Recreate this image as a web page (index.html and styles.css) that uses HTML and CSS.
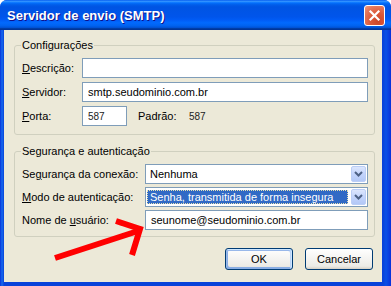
FILE: index.html
```html
<!DOCTYPE html>
<html lang="pt-BR">
<head>
  <meta charset="UTF-8" />
  <meta name="viewport" content="width=device-width, initial-scale=1.0" />
  <title>Servidor de envio (SMTP)</title>
  <link rel="stylesheet" href="styles.css">
</head>
<body>
  <div class="window">
    <div class="titlebar">
      <span class="title">Servidor de envio (SMTP)</span>
      <button class="close" aria-label="Fechar">
        <svg width="13" height="13" viewBox="0 0 13 13"><path d="M2.5 2.5 L10.5 10.5 M10.5 2.5 L2.5 10.5" stroke="#fff" stroke-width="2.2" stroke-linecap="square"/></svg>
      </button>
    </div>

    <div class="client">
      <fieldset class="group group-config">
        <legend>Configurações</legend>
        <div class="row">
          <label><u>D</u>escrição:</label>
          <input class="field" type="text" value="" readonly>
        </div>
        <div class="row">
          <label><u>S</u>ervidor:</label>
          <input class="field" type="text" value="smtp.seudominio.com.br" readonly>
        </div>
        <div class="row">
          <label><u>P</u>orta:</label>
          <input class="field port" type="text" value="587" readonly>
          <span class="default-label">Padrão:</span>
          <span class="default-value">587</span>
        </div>
      </fieldset>

      <fieldset class="group group-security">
        <legend>Segurança e autenticação</legend>
        <div class="row">
          <label>Se<u>g</u>urança da conexão:</label>
          <div class="combo">
            <span class="combo-value">Nenhuma</span>
            <span class="combo-btn"><svg width="9" height="6" viewBox="0 0 9 6"><path d="M1 1 L4.5 4.5 L8 1" fill="none" stroke="#4D6185" stroke-width="2"/></svg></span>
          </div>
        </div>
        <div class="row">
          <label><u>M</u>odo de autenticação:</label>
          <div class="combo">
            <span class="combo-value selected">Senha, transmitida de forma insegura</span>
            <span class="combo-btn"><svg width="9" height="6" viewBox="0 0 9 6"><path d="M1 1 L4.5 4.5 L8 1" fill="none" stroke="#4D6185" stroke-width="2"/></svg></span>
          </div>
        </div>
        <div class="row">
          <label>Nome de <u>u</u>suário:</label>
          <input class="field" type="text" value="seunome@seudominio.com.br" readonly>
        </div>
      </fieldset>

      <div class="buttons">
        <button class="btn default">OK</button>
        <button class="btn">Cancelar</button>
      </div>
    </div>

    <svg class="arrow" width="391" height="286" viewBox="0 0 391 286">
      <path d="M55 258 L138 231" stroke="#FF0000" stroke-width="6" fill="none"/>
      <path d="M116 221 L140 229 L132 255" stroke="#FF0000" stroke-width="6" fill="none" stroke-linejoin="miter"/>
    </svg>
  </div>
</body>
</html>
```

FILE: styles.css
```css
* {
  box-sizing: border-box;
}
body {
  margin: 0;
  font-family: "Liberation Sans", Arial, sans-serif;
  font-size: 11px;
  color: #000;
  background: #fff;
}
.window {
  position: relative;
  width: 391px;
  height: 286px;
  display: flex;
  flex-direction: column;
  background: linear-gradient(to right, #0831D9, #166AEE 2px, #0842DA 4px, #0842DA 383px, #0A4FE6 386px, #0831D9);
  border-radius: 7px 7px 0 0;
  overflow: hidden;
}
.titlebar {
  height: 30px;
  flex: none;
  display: flex;
  align-items: center;
  padding: 0 6px 0 7px;
  background: linear-gradient(to bottom, #0058EE 0%, #3593FF 4%, #288EFF 6%, #127DFF 8%, #036FFC 10%, #0262EE 14%, #0057E5 20%, #0054E3 24%, #0055EB 56%, #005BF5 66%, #026AFE 76%, #0062EF 86%, #0052D6 92%, #0040AB 94%, #003092 100%);
}
.title {
  flex: 1;
  color: #fff;
  font-weight: bold;
  font-size: 13px;
  text-shadow: 1px 1px #0F1089;
}
.close {
  width: 21px;
  height: 21px;
  padding: 0;
  display: flex;
  align-items: center;
  justify-content: center;
  border: 1px solid #fff;
  border-radius: 3px;
  background: radial-gradient(circle at 70% 80%, #CC4628 0%, #DC5939 40%, #E5785B 75%, #F09A80 100%);
}
.client {
  flex: 1;
  margin: 0 9px 4px 4px;
  padding: 9px 7px 0 10px;
  background: #ECE9D8;
}
.group {
  margin: 0;
  border: 1px solid #D0D0BF;
  border-radius: 3px;
  padding: 6px 6px 8px 7px;
  display: flex;
  flex-direction: column;
  gap: 4px;
}
.group legend {
  padding: 0 1px;
  margin-left: -1px;
  line-height: 13px;
}
.group-security {
  margin-top: 10px;
  padding-bottom: 6px;
  gap: 3px;
}
.row {
  display: flex;
  align-items: center;
  height: 20px;
}
.row label {
  flex: none;
  width: 60px;
}
.group-security .row label {
  width: 123px;
}
.field {
  flex: 1;
  min-width: 0;
  height: 20px;
  margin: 0;
  padding: 0 5px;
  border: 1px solid #7F9DB9;
  background: #fff;
  font-family: inherit;
  font-size: 11px;
  color: #000;
  outline: none;
}
.field.port {
  flex: none;
  width: 45px;
  font-size: 10px;
  color: #222;
}
.default-label {
  margin-left: 11px;
  width: 51px;
}
.default-value {
  font-size: 10px;
  color: #222;
}
.combo {
  flex: 1;
  height: 20px;
  display: flex;
  align-items: stretch;
  border: 1px solid #7F9DB9;
  background: #fff;
}
.combo-value {
  flex: 1;
  margin: 2px 2px 2px 1px;
  padding: 0 3px;
  display: flex;
  align-items: center;
  white-space: nowrap;
  overflow: hidden;
}
.combo-value.selected {
  background: #316AC5;
  color: #fff;
  outline: 1px dotted #E8E2B0;
  outline-offset: -1px;
}
.combo-btn {
  flex: none;
  width: 15px;
  margin: 1px;
  display: flex;
  align-items: center;
  justify-content: center;
  border: 1px solid #BBCEF6;
  border-radius: 2px;
  background: linear-gradient(to bottom, #DCE6FD, #C3D4FC 50%, #B3C8F6);
}
.buttons {
  display: flex;
  justify-content: flex-end;
  gap: 12px;
  margin-top: 11px;
  padding-right: 2px;
}
.btn {
  width: 68px;
  height: 22px;
  padding: 0;
  border: 1px solid #003C74;
  border-radius: 3px;
  background: linear-gradient(to bottom, #fff, #ECEBE6 86%, #D6D0C5);
  font-family: inherit;
  font-size: 11px;
  color: #000;
}
.btn.default {
  box-shadow: inset -1px 1px #CEE7FF, inset 1px 2px #98B8EA, inset -2px 2px #BCD4F6, inset 1px -1px #89ADE4, inset 2px -2px #89ADE4;
}
.arrow {
  position: absolute;
  left: 0;
  top: 0;
  pointer-events: none;
}
```
